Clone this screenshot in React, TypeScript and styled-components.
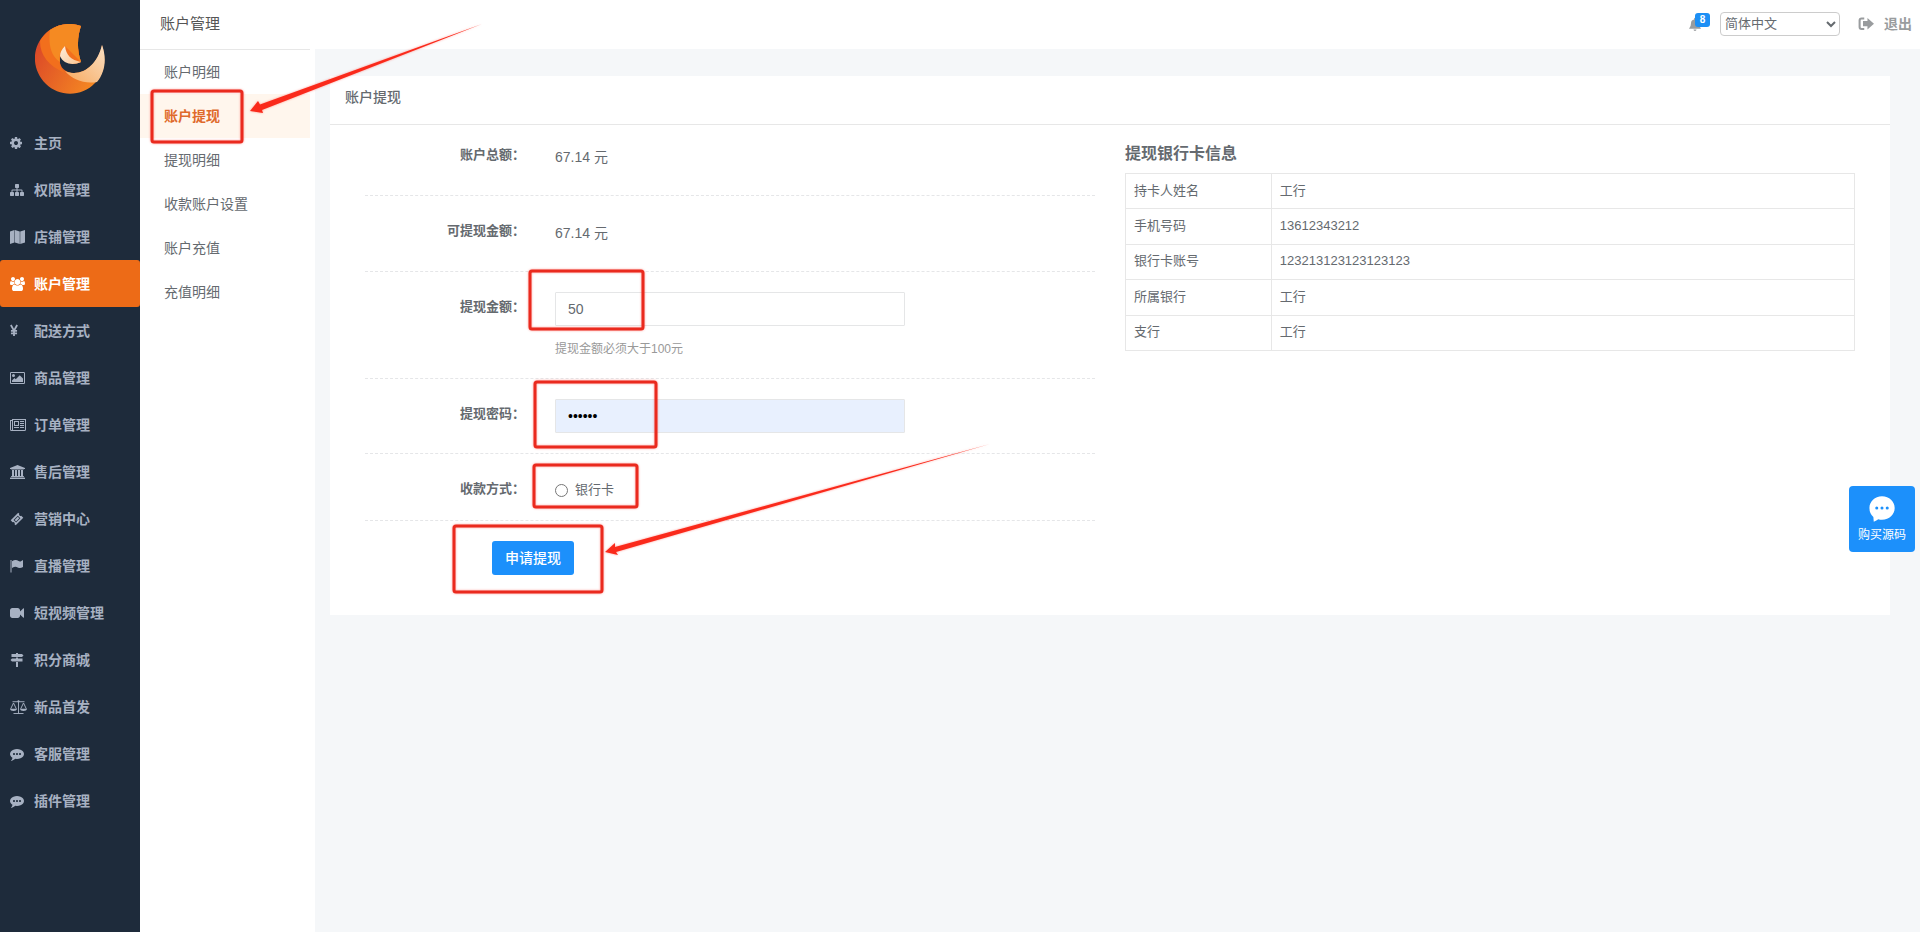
import React from 'react';
import styled, { createGlobalStyle, css } from 'styled-components';

const GlobalStyle = createGlobalStyle`
  *, *::before, *::after { box-sizing: border-box; }
  body {
    margin: 0;
    background: #f5f7f9;
    color: #656a6f;
    font: 14px/20px "Liberation Sans", "Noto Sans CJK SC", sans-serif;
  }
  button, input, select { font: inherit; color: inherit; }
  a { color: inherit; text-decoration: none; }
  ul { list-style: none; margin: 0; padding: 0; }
`;

const Shell = styled.div`
  display: flex;
  min-height: 100vh;
  position: relative;
`;

const Sidebar = styled.nav`
  flex: 0 0 140px;
  background: #1e2b3b;
`;

const Brand = styled.div`
  display: flex;
  justify-content: center;
  padding: 24px 0 25px;
`;

const NavLink = styled.a<{ $active?: boolean }>`
  display: grid;
  grid-template-columns: 24px 1fr;
  align-items: center;
  height: 47px;
  padding-left: 10px;
  border-radius: 3px;
  font-weight: 700;
  color: #a7b1c2;
  ${p => p.$active && css`
    background: #ed6b17;
    color: #fff;
  `}
`;

const SubMenu = styled.aside`
  flex: 0 0 175px;
  padding-right: 5px;
  background: #fff;
`;

const SubTitle = styled.h2`
  height: 50px;
  margin: 0;
  padding: 9px 20px;
  border-bottom: 1px solid #e7e7e7;
  font-size: 15px;
  line-height: 30px;
  font-weight: 400;
  color: #555;
`;

const SubLink = styled.a<{ $active?: boolean }>`
  display: block;
  padding-left: 24px;
  line-height: 44px;
  ${p => p.$active && css`
    background: #fff6ed;
    color: #df6a2b;
    font-weight: 700;
  `}
`;

const Main = styled.main`
  flex: 1;
  min-width: 0;
`;

const TopBar = styled.header`
  display: flex;
  justify-content: flex-end;
  align-items: center;
  height: 49px;
  padding: 0 8px 2px 0;
  background: #fff;
  color: #999c9e;
`;

const Notice = styled.button`
  position: relative;
  display: flex;
  width: 22px;
  height: 24px;
  padding: 5px 0 0;
  margin-right: 10px;
  border: 0;
  background: none;
`;

const Badge = styled.span`
  position: absolute;
  top: 1px;
  right: 0;
  width: 15px;
  border-radius: 3px;
  background: #1c8ff5;
  color: #fff;
  font-size: 10px;
  font-weight: 700;
  line-height: 14px;
  text-align: center;
`;

const Language = styled.select`
  width: 120px;
  height: 24px;
  margin-right: 18px;
  border: 1px solid #ccc;
  border-radius: 4px;
  background: #fff;
  color: #656a6f;
  font-size: 13px;
`;

const Logout = styled.a`
  display: flex;
  align-items: center;
  gap: 10px;
  font-weight: 700;
`;

const Card = styled.section`
  margin: 27px 30px 0 15px;
  background: #fff;
`;

const CardTitle = styled.h1`
  margin: 0;
  padding: 6px 15px 12px;
  border-bottom: 1px solid #e7e7e7;
  font-size: 14px;
  line-height: 30px;
  font-weight: 500;
`;

const Columns = styled.div`
  display: grid;
  grid-template-columns: 1fr 1fr;
  gap: 30px;
  padding: 0 35px 40px;
`;

const Row = styled.div<{ $tight?: boolean }>`
  display: grid;
  grid-template-columns: 160px 350px;
  column-gap: 30px;
  padding: 20px 0 ${p => (p.$tight ? 14 : 20)}px;
  border-bottom: 1px dashed #e5e6e8;
  &:first-child { padding-top: 15px; }
`;

const labelText = css`
  font-size: 13px;
  line-height: 30px;
  font-weight: 700;
  text-align: right;
`;
const RowLabel = styled.label`${labelText}`;
const RowName = styled.span`${labelText}`;

const Value = styled.span`
  line-height: 35px;
`;

const TextInput = styled.input<{ $filled?: boolean }>`
  display: block;
  width: 100%;
  height: 34px;
  padding: 6px 12px;
  border: 1px solid #e5e6e7;
  border-radius: 1px;
  background: ${p => (p.$filled ? '#e8f0fe' : '#fff')};
  color: ${p => (p.$filled ? '#000' : '#656a6f')};
`;

const Help = styled.p`
  margin: 14px 0 0;
  font-size: 12px;
  line-height: 18px;
  color: #999;
`;

const Choice = styled.label`
  display: flex;
  align-items: center;
  gap: 7px;
  height: 32px;
  font-size: 13px;
  line-height: 30px;
  input { width: 13px; height: 13px; margin: 0; }
`;

const Submit = styled.button`
  height: 34px;
  margin: 20px 0 0 127px;
  padding: 0 13px;
  border: 0;
  border-radius: 3px;
  background: #1c90fb;
  color: #fff;
  font-weight: 500;
`;

const BankTitle = styled.h3`
  margin: 0;
  padding: 17px 0 7px;
  font-size: 16px;
  line-height: 24px;
  font-weight: 700;
`;

const BankTable = styled.table`
  width: 100%;
  height: 178px;
  border-collapse: collapse;
  font-size: 13px;
  line-height: 18px;
  th, td {
    padding: 7px 8px 8px;
    border: 1px solid #e7e7e7;
    font-weight: 400;
    text-align: left;
  }
  th { width: 20%; }
`;

const BuyButton = styled.button`
  position: fixed;
  right: 5px;
  top: 486px;
  display: flex;
  flex-direction: column;
  align-items: center;
  gap: 4px;
  width: 66px;
  height: 66px;
  padding: 10px 0 0;
  border: 0;
  border-radius: 4px;
  background: #1c90fb;
  color: #fff;
  font-size: 12px;
  line-height: 18px;
`;

const Annotations = styled.svg`
  position: absolute;
  top: 0;
  left: 0;
  pointer-events: none;
  fill: none;
  stroke: #ea2a1e;
  stroke-width: 3;
  filter: drop-shadow(0 0 1px rgba(255, 60, 50, 0.5));
`;

type Glyph = { box: number; body: React.ReactNode };

const commenting = 'M640 896q0-53-37.5-90.5t-90.5-37.5-90.5 37.5-37.5 90.5 37.5 90.5 90.5 37.5 90.5-37.5 37.5-90.5zm384 0q0-53-37.5-90.5t-90.5-37.5-90.5 37.5-37.5 90.5 37.5 90.5 90.5 37.5 90.5-37.5 37.5-90.5zm384 0q0-53-37.5-90.5t-90.5-37.5-90.5 37.5-37.5 90.5 37.5 90.5 90.5 37.5 90.5-37.5 37.5-90.5zm384 0q0 174-120 321.5t-326 233-450 85.5q-110 0-211-18-173 173-435 229-52 10-86 13-12 1-22-6t-13-18q-4-15 20-37 5-5 23.5-21.5t25.5-23.5 23.5-25.5 24-31.5 20.5-37 20-48 14.5-57.5 12.5-72.5q-146-90-229.5-216.5t-83.5-269.5q0-174 120-321.5t326-233 450-85.5 450 85.5 326 233 120 321.5z';

const glyphs: Record<string, Glyph> = {
  cog: { box: 1536, body: <path transform="translate(-128 0)" d="M1152 896q0-106-75-181t-181-75-181 75-75 181 75 181 181 75 181-75 75-181zm512-109v222q0 12-8 23t-20 13l-185 28q-19 54-39 91 35 50 107 138 10 12 10 25t-9 23q-27 37-99 108t-94 71q-12 0-26-9l-138-108q-44 23-91 38-16 136-29 186-7 28-36 28h-222q-14 0-24.5-8.5t-11.5-21.5l-28-184q-49-16-90-37l-141 107q-10 9-25 9-14 0-25-11-126-114-165-168-7-10-7-23 0-12 8-23 15-21 51-66.5t54-70.5q-27-50-41-99l-183-27q-13-2-21-12.5t-8-23.5v-222q0-12 8-23t19-13l186-28q14-46 39-92-40-57-107-138-10-12-10-24 0-10 9-23 26-36 98.5-107.5t94.5-71.5q13 0 26 10l138 107q44-23 91-38 16-136 29-186 7-28 36-28h222q14 0 24.5 8.5t11.5 21.5l28 184q49 16 90 37l142-107q9-9 24-9 13 0 25 10 129 119 165 170 7 8 7 22 0 12-8 23-15 21-51 66.5t-54 70.5q26 50 41 98l183 28q13 2 21 12.5t8 23.5z" /> },
  sitemap: { box: 1792, body: <path d="M1792 1248v320q0 40-28 68t-68 28h-320q-40 0-68-28t-28-68v-320q0-40 28-68t68-28h96v-192h-512v192h96q40 0 68 28t28 68v320q0 40-28 68t-68 28h-320q-40 0-68-28t-28-68v-320q0-40 28-68t68-28h96v-192h-512v192h96q40 0 68 28t28 68v320q0 40-28 68t-68 28h-320q-40 0-68-28t-28-68v-320q0-40 28-68t68-28h96v-192q0-52 38-90t90-38h512v-192h-96q-40 0-68-28t-28-68v-320q0-40 28-68t68-28h320q40 0 68 28t28 68v320q0 40-28 68t-68 28h-96v192h512q52 0 90 38t38 90v192h96q40 0 68 28t28 68z" /> },
  map: { box: 1920, body: <path d="M0 192L570 0V1600L0 1792zM630 0L1250 192V1792L630 1600zM1310 192L1920 0V1600L1310 1792z" /> },
  users: { box: 1920, body: <path d="M593 896q-162 5-265 128h-134q-82 0-138-40.5t-56-118.5q0-353 124-353 6 0 43.5 21t97.5 42.5 119 21.5q67 0 133-23-5 37-5 66 0 139 81 256zm1071 637q0 120-73 189.5t-194 69.5h-874q-121 0-194-69.5t-73-189.5q0-53 3.5-103.5t14-109 26.5-108.5 43-97.5 62-81 85.5-53.5 111.5-20q10 0 43 21.5t73 48 107 48 135 21.5 135-21.5 107-48 73-48 43-21.5q61 0 111.5 20t85.5 53.5 62 81 43 97.5 26.5 108.5 14 109 3.5 103.5zm-1024-1277q0 106-75 181t-181 75-181-75-75-181 75-181 181-75 181 75 75 181zm704 384q0 159-112.5 271.5t-271.5 112.5-271.5-112.5-112.5-271.5 112.5-271.5 271.5-112.5 271.5 112.5 112.5 271.5zm576 225q0 78-56 118.5t-138 40.5h-134q-103-123-265-128 81-117 81-256 0-29-5-66 66 23 133 23 59 0 119-21.5t97.5-42.5 43.5-21q124 0 124 353zm-128-609q0 106-75 181t-181 75-181-75-75-181 75-181 181-75 181 75 75 181z" /> },
  yen: { box: 1024, body: <path fill="none" stroke="currentColor" strokeWidth="230" d="M110 130L512 850L914 130M512 850V1536M120 890H904M120 1190H904" /> },
  image: { box: 1920, body: <path fillRule="evenodd" d="M160 128h1600a160 160 0 0 1 160 160v1216a160 160 0 0 1-160 160h-1600a160 160 0 0 1-160-160v-1216a160 160 0 0 1 160-160zM128 256v1280h1664v-1280zM256 1408v-192l320-320 160 160 512-512 416 416v448zM256 576a192 192 0 1 1 384 0a192 192 0 1 1-384 0z" /> },
  news: { box: 2048, body: <path fillRule="evenodd" d="M256 128h1792v1344a192 192 0 0 1-192 192h-1664a192 192 0 0 1-192-192v-1216h256zM128 384v1088a64 64 0 0 0 128 0v-1088zM384 256v1280h1472a64 64 0 0 0 64-64v-1216zM512 384h640v640h-640zM640 512v384h384v-384zM512 1152h640v128h-640zM1280 384h512v128h-512zM1280 640h512v128h-512zM1280 896h512v128h-512zM1280 1152h512v128h-512z" /> },
  bank: { box: 1920, body: <path d="M960 0l960 384v128h-128q0 26-20.500 45t-48.500 19h-1526q-28 0-48.500-19t-20.500-45h-128v-128zm-704 640h256v768h128v-768h256v768h128v-768h256v768h128v-768h256v768h59q28 0 48.500 19t20.500 45v64h-1664v-64q0-26 20.500-45t48.500-19h59zM69 1600h1782q28 0 48.500 19t20.500 45v128h-1920v-128q0-26 20.500-45t48.500-19z" /> },
  ticket: { box: 1792, body: <path fillRule="evenodd" d="M1050 80L1190 220a180 180 0 0 0 250 250L1700 730L730 1710L580 1560a180 180 0 0 0-250-250L90 1060zM1000 470L450 1020L780 1350L1330 800zM1000 610L1190 800L780 1210L590 1020z" /> },
  flag: { box: 1792, body: <path d="M64 128h128v1600h-128zM256 290Q520 130 720 140T1100 260T1450 240L1664 140V1010Q1450 1150 1250 1150T850 1020T256 1160z" /> },
  video: { box: 1792, body: <path d="M1792 352v1088q0 42-39 59-13 5-25 5-27 0-45-19l-403-403v166q0 119-84.500 203.500t-203.500 84.500h-704q-119 0-203.500-84.500t-84.500-203.500v-704q0-119 84.500-203.500t203.500-84.500h704q119 0 203.500 84.500t84.500 203.500v165l403-402q18-19 45-19 12 0 25 5 39 17 39 59z" /> },
  signs: { box: 1792, body: <path d="M768 0h256v128h-256zM192 128h1344l192 192-192 192h-1344zM768 560h256v128h-256zM256 704h1344v384h-1344l-192-192zM768 1136h256v656h-256z" /> },
  scale: { box: 2176, body: <><path fill="none" stroke="currentColor" strokeWidth="120" d="M320 220H1856M1088 100V1700M448 1728H1728M90 1130L448 380L806 1130M1370 1130L1728 380L2086 1130" /><path d="M0 1130H896Q850 1410 448 1410T0 1130zM1280 1130H2176Q2130 1410 1728 1410T1280 1130z" /><circle cx="1088" cy="160" r="140" /></> },
  comment: { box: 1792, body: <path d={commenting} /> },
  bubble: { box: 1792, body: <path fillRule="evenodd" d="M896 20C1400 20 1770 380 1770 830S1400 1640 896 1640Q760 1640 640 1600Q520 1680 330 1780L300 1450Q30 1210 30 830C30 380 400 20 896 20zM430 830a105 105 0 1 0 210 0a105 105 0 1 0-210 0zM791 830a105 105 0 1 0 210 0a105 105 0 1 0-210 0zM1152 830a105 105 0 1 0 210 0a105 105 0 1 0-210 0z" /> },
  bell: { box: 1792, body: <path d="M896 1792a190 190 0 0 1-190-200h380a190 190 0 0 1-190 200zM128 1500Q384 1250 384 800Q384 400 780 320V220A116 116 0 0 1 1012 220V320Q1408 400 1408 800Q1408 1250 1664 1500z" /> },
  exit: { box: 1792, body: <><path fill="none" stroke="currentColor" strokeWidth="230" d="M700 270H400Q180 270 180 490V1240Q180 1460 400 1460H700" /><path d="M1060 220L1790 860L1060 1500V1160H560V560H1060z" /></> },
};

function Icon({ name, height = 14 }: { name: string; height?: number }) {
  const g = glyphs[name];
  return (
    <svg width={Math.round((g.box * height) / 1792)} height={height} viewBox={`0 0 ${g.box} 1792`} fill="currentColor" aria-hidden="true">
      {g.body}
    </svg>
  );
}

function Logo() {
  return (
    <svg width="70" height="70" viewBox="0 0 70 70" aria-label="Logo" role="img">
      <defs>
        <linearGradient id="flame" x1="0" y1="0.4" x2="0.9" y2="0.9">
          <stop offset="0" stopColor="#dc4a28" />
          <stop offset="1" stopColor="#f68b22" />
        </linearGradient>
        <linearGradient id="tail" x1="0" y1="1" x2="1" y2="0">
          <stop offset="0" stopColor="#f7a95e" />
          <stop offset="1" stopColor="#fae0c4" />
        </linearGradient>
        <linearGradient id="core" x1="0" y1="0" x2="1" y2="1">
          <stop offset="0" stopColor="#fdeedd" />
          <stop offset="1" stopColor="#f9c592" />
        </linearGradient>
      </defs>
      <path fill="url(#flame)" d="M46 2C43 10 41 24 46 38C38 42 30 39 26 31C22 40 28 49 39 49C52 49 64 37 67 21C72 36 69 50 60 59C47 73 24 73 11 60C-4 45-3 24 9 11C18 1 33-3 46 2z" />
      <path fill="#f26f1d" d="M15 6C24 0 35-2 46 2C43 10 41 24 46 38L40 39C30 38 27 33 26 28C23 37 25 44 30 49C14 42 5 32 5 17C8 12 11 9 15 6z" />
      <path fill="#f58a22" d="M15 6C24 0 35-2 46 2C43 10 41 24 46 38L30 22C25 26 24 32 25 38C13 30 14 14 15 6z" />
      <path fill="url(#tail)" d="M30 47C46 54 62 42 67 21C72 35 70 48 62 58C49 60 38 56 30 47z" />
      <path fill="url(#core)" d="M30 22C31 31 36 36 46 38C38 42 28 40 25 32C25 28 27 25 30 22z" />
    </svg>
  );
}

const navItems: [string, string][] = [
  ['cog', '主页'], ['sitemap', '权限管理'], ['map', '店铺管理'], ['users', '账户管理'],
  ['yen', '配送方式'], ['image', '商品管理'], ['news', '订单管理'], ['bank', '售后管理'],
  ['ticket', '营销中心'], ['flag', '直播管理'], ['video', '短视频管理'], ['signs', '积分商城'],
  ['scale', '新品首发'], ['comment', '客服管理'], ['comment', '插件管理'],
];

const subItems = ['账户明细', '账户提现', '提现明细', '收款账户设置', '账户充值', '充值明细'];

const bankInfo = [
  ['持卡人姓名', '工行'],
  ['手机号码', '13612343212'],
  ['银行卡账号', '123213123123123123'],
  ['所属银行', '工行'],
  ['支行', '工行'],
];

export default function App() {
  return (
    <Shell>
      <GlobalStyle />
      <Sidebar>
        <Brand><Logo /></Brand>
        <ul>
          {navItems.map(([icon, label]) => (
            <li key={label}>
              <NavLink href="#" $active={label === '账户管理'}><Icon name={icon} />{label}</NavLink>
            </li>
          ))}
        </ul>
      </Sidebar>
      <SubMenu>
        <SubTitle>账户管理</SubTitle>
        <ul>
          {subItems.map(label => (
            <li key={label}><SubLink href="#" $active={label === '账户提现'}>{label}</SubLink></li>
          ))}
        </ul>
      </SubMenu>
      <Main>
        <TopBar>
          <Notice type="button"><Icon name="bell" /><Badge>8</Badge></Notice>
          <Language aria-label="语言" defaultValue="zh"><option value="zh">简体中文</option></Language>
          <Logout href="#"><Icon name="exit" height={16} />退出</Logout>
        </TopBar>
        <Card>
          <CardTitle>账户提现</CardTitle>
          <Columns>
            <form onSubmit={e => e.preventDefault()}>
              <Row><RowName>账户总额：</RowName><Value>67.14 元</Value></Row>
              <Row><RowName>可提现金额：</RowName><Value>67.14 元</Value></Row>
              <Row>
                <RowLabel htmlFor="amount">提现金额：</RowLabel>
                <div>
                  <TextInput id="amount" type="text" defaultValue="50" />
                  <Help>提现金额必须大于100元</Help>
                </div>
              </Row>
              <Row>
                <RowLabel htmlFor="password">提现密码：</RowLabel>
                <TextInput id="password" type="password" defaultValue="123456" $filled />
              </Row>
              <Row $tight>
                <RowName>收款方式：</RowName>
                <Choice><input type="radio" name="method" />银行卡</Choice>
              </Row>
              <Submit type="submit">申请提现</Submit>
            </form>
            <div>
              <BankTitle>提现银行卡信息</BankTitle>
              <BankTable>
                <tbody>
                  {bankInfo.map(([name, value]) => (
                    <tr key={name}><th scope="row">{name}</th><td>{value}</td></tr>
                  ))}
                </tbody>
              </BankTable>
            </div>
          </Columns>
        </Card>
      </Main>
      <BuyButton type="button"><Icon name="bubble" height={26} />购买源码</BuyButton>
      <Annotations width="1000" height="620" viewBox="0 0 1000 620" aria-hidden="true">
        <rect x="152" y="91" width="90" height="51" rx="2" />
        <rect x="530" y="271" width="113" height="58" rx="2" />
        <rect x="535" y="382" width="121" height="65" rx="2" />
        <rect x="534" y="465" width="103" height="42" rx="2" />
        <rect x="454" y="526" width="148" height="66" rx="2" />
        <g fill="#fa2a1b" stroke="none">
          <path d="M250 111L258 101L260 104.500L482 24L262 110L263 113z" />
          <path d="M605 552L615 543L615 547L990 444L616 552L618 555z" />
        </g>
      </Annotations>
    </Shell>
  );
}
